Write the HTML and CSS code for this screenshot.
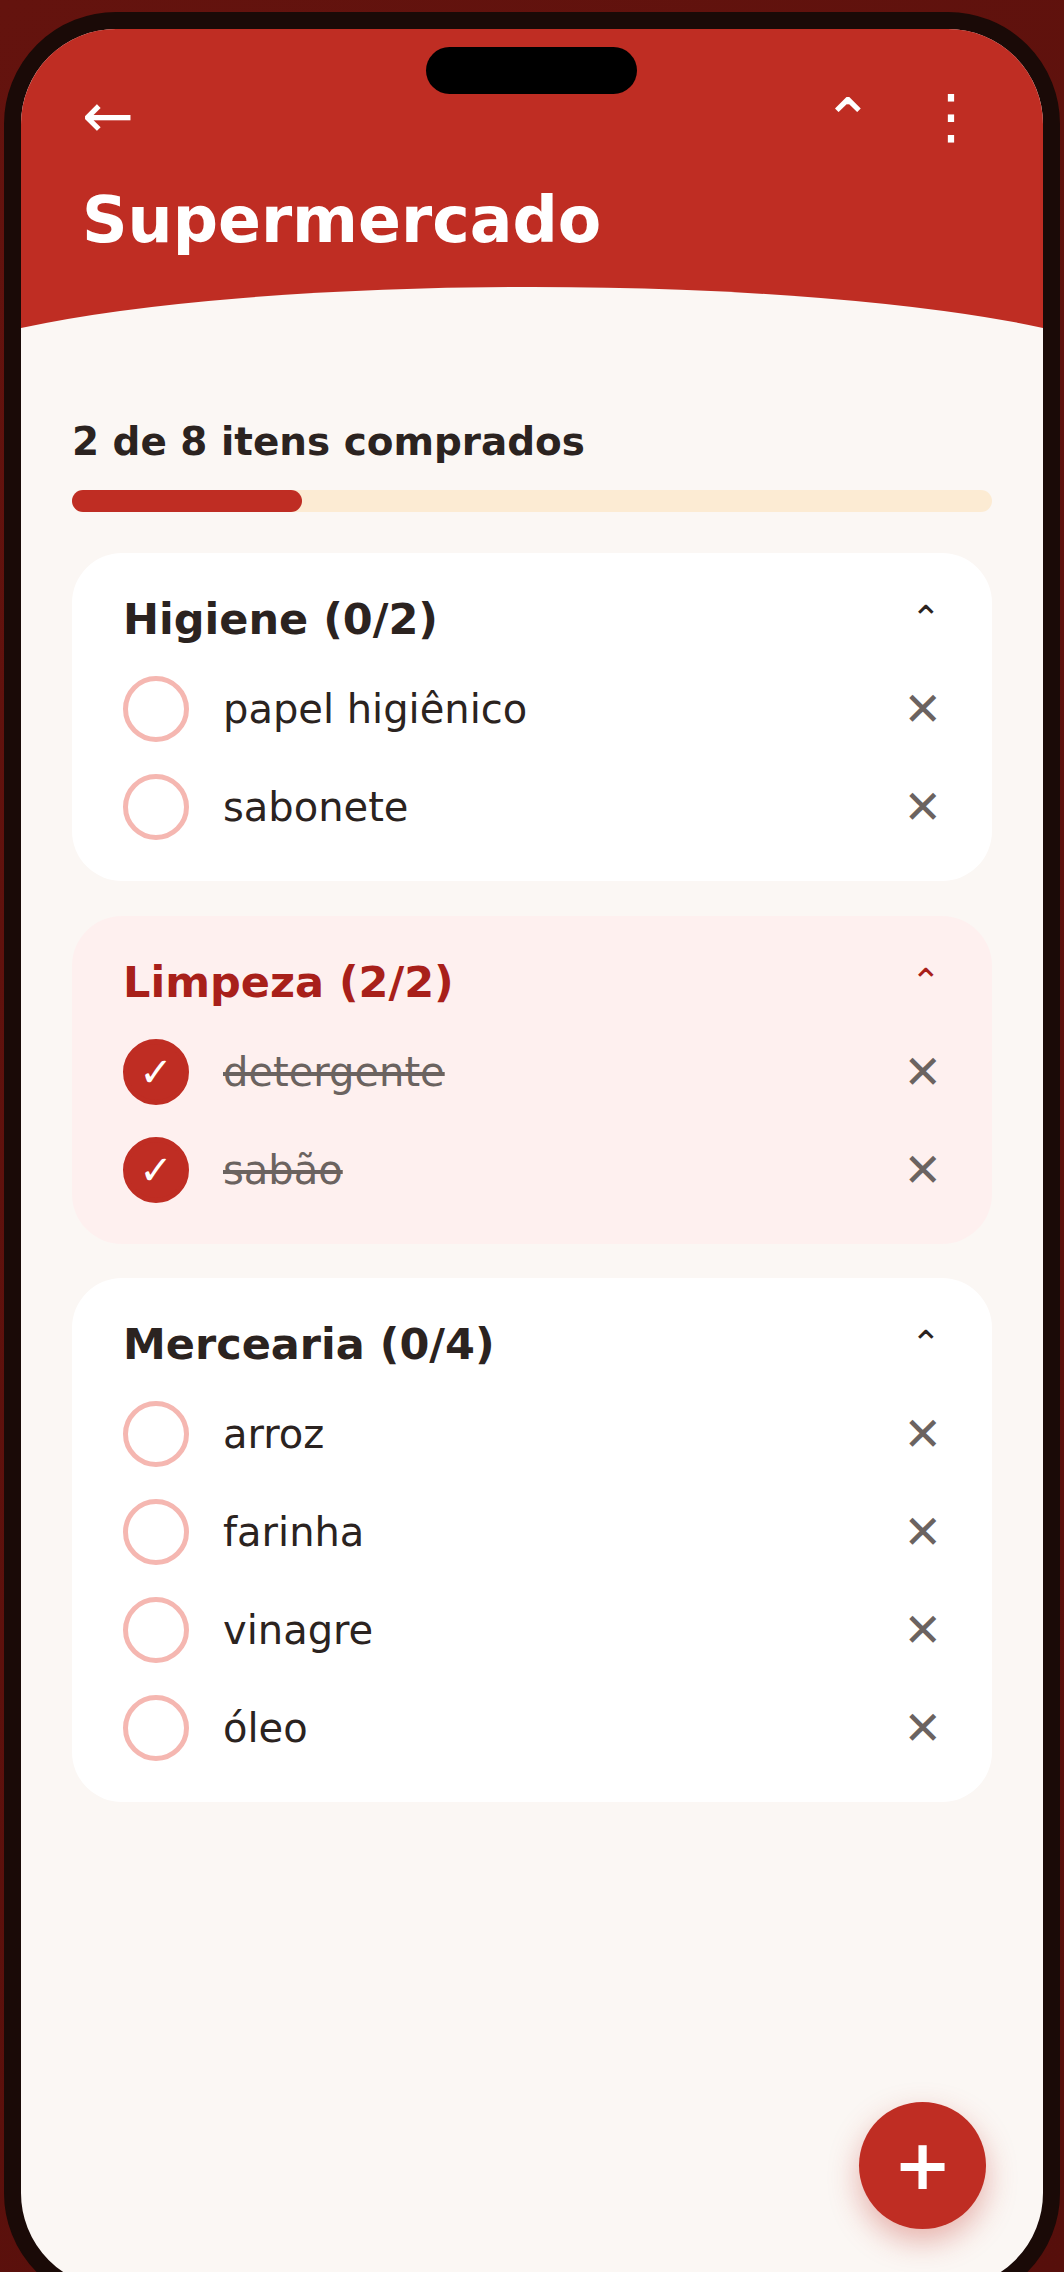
FILE: index.html
```html
<!DOCTYPE html>
<html lang="pt-BR">
<head>
    <meta charset="UTF-8">
    <meta name="viewport" content="width=device-width, initial-scale=1.0">
    <title>Supermercado</title>
    <link rel="stylesheet" href="styles.css">
</head>
<body>
    <div class="phone">
        <div class="island"></div>

        <header class="header">
            <div class="toolbar">
                <span class="back">←</span>
                <div class="actions">
                    <span class="collapse-all">⌃</span>
                    <span class="menu">⋮</span>
                </div>
            </div>
            <h1 class="title">Supermercado</h1>
            <svg class="curve" viewBox="0 0 1022 41" preserveAspectRatio="none">
                <path d="M0 41 A620 94.5 0 0 1 1022 41 Z" fill="#fbf7f4"/>
            </svg>
        </header>

        <main class="content">
            <p class="progress-label">2 de 8 itens comprados</p>
            <div class="progress-track">
                <div class="progress-fill" style="width: 25%"></div>
            </div>

            <section class="card">
                <div class="card-head">
                    <h2 class="card-title">Higiene (0/2)</h2>
                    <span class="chevron">⌃</span>
                </div>
                <div class="item">
                    <span class="check"></span>
                    <span class="item-name">papel higiênico</span>
                    <span class="remove">✕</span>
                </div>
                <div class="item">
                    <span class="check"></span>
                    <span class="item-name">sabonete</span>
                    <span class="remove">✕</span>
                </div>
            </section>

            <section class="card card-done">
                <div class="card-head">
                    <h2 class="card-title">Limpeza (2/2)</h2>
                    <span class="chevron">⌃</span>
                </div>
                <div class="item item-done">
                    <span class="check">✓</span>
                    <span class="item-name">detergente</span>
                    <span class="remove">✕</span>
                </div>
                <div class="item item-done">
                    <span class="check">✓</span>
                    <span class="item-name">sabão</span>
                    <span class="remove">✕</span>
                </div>
            </section>

            <section class="card">
                <div class="card-head">
                    <h2 class="card-title">Mercearia (0/4)</h2>
                    <span class="chevron">⌃</span>
                </div>
                <div class="item">
                    <span class="check"></span>
                    <span class="item-name">arroz</span>
                    <span class="remove">✕</span>
                </div>
                <div class="item">
                    <span class="check"></span>
                    <span class="item-name">farinha</span>
                    <span class="remove">✕</span>
                </div>
                <div class="item">
                    <span class="check"></span>
                    <span class="item-name">vinagre</span>
                    <span class="remove">✕</span>
                </div>
                <div class="item">
                    <span class="check"></span>
                    <span class="item-name">óleo</span>
                    <span class="remove">✕</span>
                </div>
            </section>
        </main>

        <button class="fab" type="button">+</button>
    </div>
</body>
</html>
```

FILE: styles.css
```css
* {
    box-sizing: border-box;
}
html, body {
    height: 2272px;
    overflow: hidden;
}
body {
    margin: 0;
    padding: 12px 4px 0;
    font-family: "DejaVu Sans", sans-serif;
    color: #2b2320;
    background: linear-gradient(135deg, #64130e, #560f0b);
}
.phone {
    position: relative;
    height: 2293px;
    border: 17px solid #1a0a07;
    border-radius: 112px;
    background: #fbf7f4;
    overflow: hidden;
}
.island {
    position: absolute;
    top: 18px;
    left: 405px;
    width: 211px;
    height: 47px;
    border-radius: 24px;
    background: #000;
}

/* cabecalho */
.header {
    height: 299px;
    background: #bf2d23;
    color: #fff;
    display: flex;
    flex-direction: column;
}
.toolbar {
    display: flex;
    justify-content: space-between;
    align-items: center;
    height: 60px;
    margin-top: 58px;
    padding: 0 62px 0 61px;
}
.back {
    padding-bottom: 2px;
    font-size: 62px;
    line-height: 60px;
}
.actions {
    display: flex;
    align-items: center;
    gap: 48px;
}
.collapse-all {
    padding-top: 6px;
    font-size: 60px;
    line-height: 60px;
}
.menu {
    padding-bottom: 3px;
    font-size: 60px;
    line-height: 60px;
}
.title {
    margin: 35px 0 0 61px;
    font-size: 63.3px;
    line-height: 76px;
    font-weight: 700;
}
.curve {
    display: block;
    width: 100%;
    height: 41px;
    margin-top: auto;
}

/* conteudo */
.content {
    padding: 89px 51px 0;
}
.progress-label {
    margin: 0;
    font-size: 38.9px;
    line-height: 50px;
    font-weight: 700;
}
.progress-track {
    height: 22px;
    margin-top: 23px;
    border-radius: 11px;
    background: #fcebd3;
}
.progress-fill {
    height: 100%;
    border-radius: 11px;
    background: #bf2d23;
}

.card {
    margin-top: 41px;
    padding: 35px 51px 41px;
    border-radius: 50px;
    background: #fff;
}
.card + .card {
    margin-top: 34.5px;
}
.card-done {
    background: #fef0ef;
    color: #a8201a;
}
.card-head {
    display: flex;
    justify-content: space-between;
    align-items: center;
    height: 62px;
    margin-bottom: 26px;
}
.card-title {
    margin: 0;
    font-size: 43px;
    line-height: 62px;
    font-weight: 700;
}
.chevron {
    font-size: 36px;
    line-height: 62px;
}

.item {
    display: flex;
    align-items: center;
    gap: 34px;
    height: 66px;
    margin-bottom: 32px;
}
.item:last-child {
    margin-bottom: 0;
}
.check {
    flex: none;
    display: flex;
    align-items: center;
    justify-content: center;
    width: 66px;
    height: 66px;
    border: 5px solid #f5b7b1;
    border-radius: 50%;
    color: #fff;
    font-size: 40px;
}
.item-done .check {
    border-color: #bf2d23;
    background: #bf2d23;
}
.item-name {
    flex: 1;
    font-size: 40px;
    line-height: 50px;
    color: #2b2320;
}
.item-done .item-name {
    color: #6b6360;
    text-decoration: line-through;
}
.remove {
    margin-right: -1px;
    color: #6b6360;
    font-size: 46px;
    line-height: 50px;
}

.fab {
    position: absolute;
    left: 838px;
    top: 2073px;
    width: 127px;
    height: 127px;
    padding: 0;
    border: none;
    border-radius: 50%;
    background: #bf2d23;
    color: #fff;
    font-family: inherit;
    font-size: 70px;
    font-weight: 700;
    line-height: 127px;
    box-shadow: 0 12px 30px rgba(191, 45, 35, 0.35);
}
```
